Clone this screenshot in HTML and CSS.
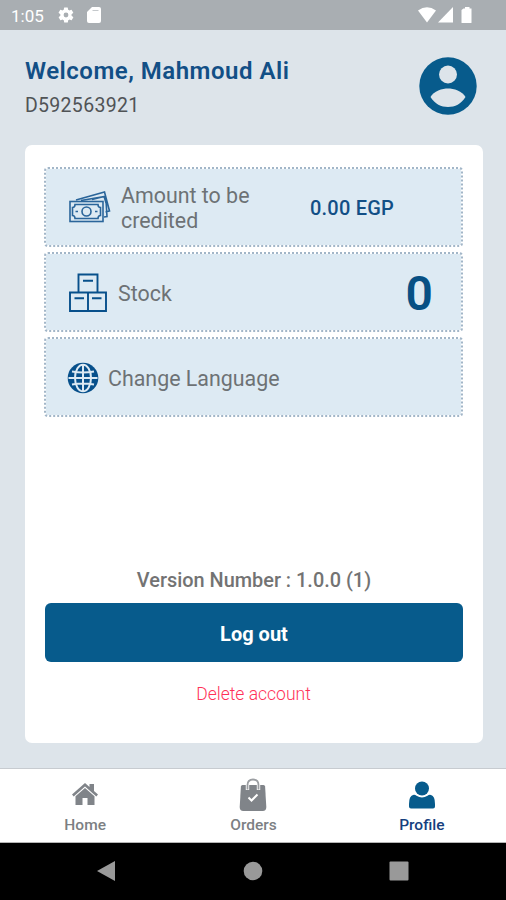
FILE: index.html
```html
<!DOCTYPE html>
<html lang="en">
<head>
<meta charset="utf-8">
<title>Profile</title>
<link rel="stylesheet" href="styles.css">
</head>
<body>
<div class="screen">
  <div class="status">
    <span class="time">1:05</span>
    <svg class="gear" width="18" height="18" viewBox="0 0 24 24"><path fill="#fff" fill-rule="evenodd" d="M19.4 13a7.500 7.500 0 0 0 0-2l2.100-1.600a.5.5 0 0 0 .1-.6l-2-3.500a.5.5 0 0 0-.6-.2l-2.500 1a7.300 7.300 0 0 0-1.700-1l-.4-2.700a.5.5 0 0 0-.5-.4h-4a.5.5 0 0 0-.5.4L9 5.100a7.300 7.300 0 0 0-1.700 1l-2.500-1a.5.5 0 0 0-.6.2l-2 3.500a.5.5 0 0 0 .1.6L4.500 11a7.500 7.500 0 0 0 0 2l-2.100 1.600a.5.5 0 0 0-.1.6l2 3.500c.1.2.4.3.6.2l2.500-1a7.300 7.300 0 0 0 1.700 1l.4 2.700c0 .2.200.4.500.4h4c.3 0 .5-.2.500-.4l.4-2.700a7.300 7.300 0 0 0 1.700-1l2.500 1c.2.100.5 0 .6-.2l2-3.500a.5.5 0 0 0-.1-.6zM12 15.200a3.200 3.200 0 1 1 0-6.400 3.200 3.200 0 0 1 0 6.400z"/></svg>
    <svg class="card-icon" width="14" height="16" viewBox="0 0 14 16"><path fill="#fff" d="M5 0h7q2 0 2 2v12q0 2-2 2H2q-2 0-2-2V5z"/><path stroke="#c5c9cc" stroke-width="1" d="M5.500 3.500h6"/></svg>
    <svg class="signals" width="56" height="16" viewBox="0 0 56 16"><g fill="#fff"><path d="M0 3.500Q9-3 18 3.500L9 15.500z"/><path d="M35 0v15.500H20z"/><path d="M45.500 1.500H47V0h4.500v1.500h2v14q0 .5-.5.500h-9q-.5 0-.5-.5V3z"/></g></svg>
  </div>
  <header class="header">
    <div class="greeting">
      <h1>Welcome, Mahmoud Ali</h1>
      <p>D592563921</p>
    </div>
    <svg class="avatar" width="58" height="58" viewBox="0 0 58 58"><circle cx="29" cy="29" r="28.700" fill="#075b8c"/><circle cx="29" cy="17.500" r="9" fill="#dde4ea"/><path fill="#dde4ea" d="M11.500 40c3-6 12-8.500 17.500-8.500S43.500 34 46.500 40C42 47 36 50 29 50S16 47 11.500 40z"/></svg>
  </header>
  <main class="panel">
    <section class="row amount">
      <svg width="42" height="34" viewBox="0 0 42 34" fill="none" stroke="#2a659a" stroke-width="1.600"><path d="M7 9L35.500 1l5 19-4 1M12 9.500l24-4 1 4 1 16-3 .5M23 8.500l10-2.500M35 5l2 7"/><rect x="1" y="10.500" width="33" height="20"/><path d="M6 13.500h23q0 3 2.500 3v8q-2.500 0-2.500 3H6q0-3-2.500-3v-8q2.500 0 2.500-3z"/><circle cx="17.500" cy="20.500" r="4.500"/><path d="M6.500 20.500h2.500m17 0h2.500"/></svg>
      <span class="label">Amount to be credited</span>
      <strong class="money">0.00 EGP</strong>
    </section>
    <section class="row stock">
      <svg width="38" height="40" viewBox="0 0 38 40" fill="none" stroke="#07508b" stroke-width="1.900"><path d="M9.500 19V1.500h19V19M1 19.500h36V38H1zM19 19.500V38M14 7.800h10M5.500 25.200H15M23 25.200h9.500"/></svg>
      <span class="label">Stock</span>
      <strong class="count">0</strong>
    </section>
    <section class="row language">
      <svg width="32" height="32" viewBox="0 0 32 32"><circle cx="16" cy="16" r="15.300" fill="#07508b"/><g fill="none" stroke="#ddeaf3" stroke-width="2"><ellipse cx="16" cy="16" rx="8" ry="13.300"/><path d="M16 2.500v27M1.500 16h29M5 9.500q11 2 22 0M5 22.500q11-2 22 0"/></g></svg>
      <span class="label">Change Language</span>
    </section>
    <p class="version">Version Number : 1.0.0 (1)</p>
    <button class="logout">Log out</button>
    <a class="delete">Delete account</a>
  </main>
  <nav class="tabs">
    <div class="tab">
      <svg width="28" height="34" viewBox="0 0 28 34" fill="#808489"><path d="M1 16.500L14 5l4.500 4V6h4.500v7L27 16.500l-1.700 2L14 8.500 2.700 18.500z"/><path d="M4.500 18.300L14 10l9.500 8.300V27H16.500v-7h-5v7h-7z"/></svg>
      <span>Home</span>
    </div>
    <div class="tab">
      <svg width="28" height="34" viewBox="0 0 28 34"><path d="M3.500 7h21q1.500 0 1.600 1.500L27.300 29q0 4-3.500 4H4.200Q.7 33 .7 29L1.900 8.500Q2 7 3.500 7z" fill="#808489"/><path d="M8.500 12V7q0-5.500 5.500-5.500T19.500 7v5" fill="none" stroke="#fff" stroke-width="3.400"/><path d="M8.500 11.500V7q0-5.500 5.500-5.500T19.500 7v4.500" fill="none" stroke="#9b9ea2" stroke-width="1.800"/><path d="M9.500 19.500l3 3 6-6" fill="none" stroke="#fff" stroke-width="2"/></svg>
      <span>Orders</span>
    </div>
    <div class="tab active">
      <svg width="28" height="34" viewBox="0 0 28 34" fill="#075b8c"><circle cx="14" cy="10.500" r="7"/><path d="M5 17q2-.5 3.500.8 5.500 3.500 11 0Q21 16.500 23 17q4 1 4 9v2.500q0 2-2 2H3q-2 0-2-2V26q0-8 4-9z"/></svg>
      <span>Profile</span>
    </div>
  </nav>
  <div class="system">
    <svg width="20" height="22" viewBox="0 0 20 22"><path d="M0 11L18 1v20z" fill="#999"/></svg>
    <svg width="20" height="22" viewBox="0 0 20 22"><circle cx="10" cy="11" r="9.300" fill="#999"/></svg>
    <svg width="20" height="22" viewBox="0 0 20 22"><rect x=".5" y="1.500" width="19" height="19" rx="1" fill="#999"/></svg>
  </div>
</div>
</body>
</html>
```
FILE: styles.css
```css
* { box-sizing: border-box; }
body { margin: 0; font-family: Roboto, sans-serif; }
h1, p { margin: 0; }
svg { display: block; flex: none; }
.screen { width: 506px; height: 900px; background: #dde4ea; display: flex; flex-direction: column; overflow: hidden; }
.status { height: 30px; flex: none; background: #a9aeb2; display: flex; align-items: center; padding: 0 32px 0 11px; }
.time { color: #fff; font-size: 17px; line-height: 30px; width: 46px; padding-top: 2px; }
.card-icon { margin-left: 12px; }
.signals { margin-left: auto; }
.header { height: 115px; flex: none; display: flex; justify-content: space-between; padding: 27px 29px 0 25px; }
h1 { color: #124f86; font-size: 24px; line-height: 28px; font-weight: 600; letter-spacing: .5px; }
.greeting p { font-size: 19.5px; line-height: 24px; margin-top: 9px; color: #505356; font-weight: 400; letter-spacing: .3px; }
.panel { width: 458px; height: 598px; flex: none; margin-left: 25px; padding: 22px 20px 23px 19px; border-radius: 7px; background: #fff; display: flex; flex-direction: column; }
.row { height: 80px; flex: none; display: flex; align-items: center; padding: 2px 0 0 23px; margin-bottom: 5px; background: #ddeaf3; background-clip: padding-box; border: 2px dotted #a2b6c8; border-radius: 4px; }
.label { color: #6d7275; font-size: 21.4px; line-height: 25px; }
.amount .label { width: 150px; margin-left: 10px; }
.money { color: #124f86; font-size: 20px; font-weight: 500; letter-spacing: .2px; margin-left: 39px; }
.stock .label { margin-left: 11px; }
.count { color: #075084; font-size: 48px; line-height: 60px; margin-left: auto; margin-right: 28px; padding-top: 2px; font-weight: 600; }
.language { padding-left: 21px; }
.language .label { margin-left: 9px; }
.version { margin-top: auto; text-align: center; font-size: 19.9px; line-height: 24px; color: #737373; font-weight: 500; padding-left: 1px; }
.logout { height: 59px; flex: none; margin-top: 10px; margin-left: 1px; border: 0; border-radius: 6px; background: #075b8c; color: #fff; font: 700 20px Roboto, sans-serif; padding-top: 3px; }
.delete { text-align: center; color: #ff3158; font-size: 17.5px; line-height: 24px; margin-top: 20px; margin-bottom: 14px; font-weight: 300; }
.tabs { height: 75px; flex: none; margin-top: 25px; background: #fff; border-top: 1px solid #c7cbd0; border-bottom: 1px solid #b5b5b5; display: grid; grid-template-columns: repeat(3, 1fr); padding-left: 1px; }
.tab { display: flex; flex-direction: column; align-items: center; padding-top: 9px; color: #7c7f83; font-size: 15.5px; line-height: 20px; font-weight: 500; }
.tab span { margin-top: 3px; }
.active { color: #153f7e; }
.system { flex: 1; background: #000; display: flex; justify-content: center; gap: 126px; padding-top: 17px; }
```
